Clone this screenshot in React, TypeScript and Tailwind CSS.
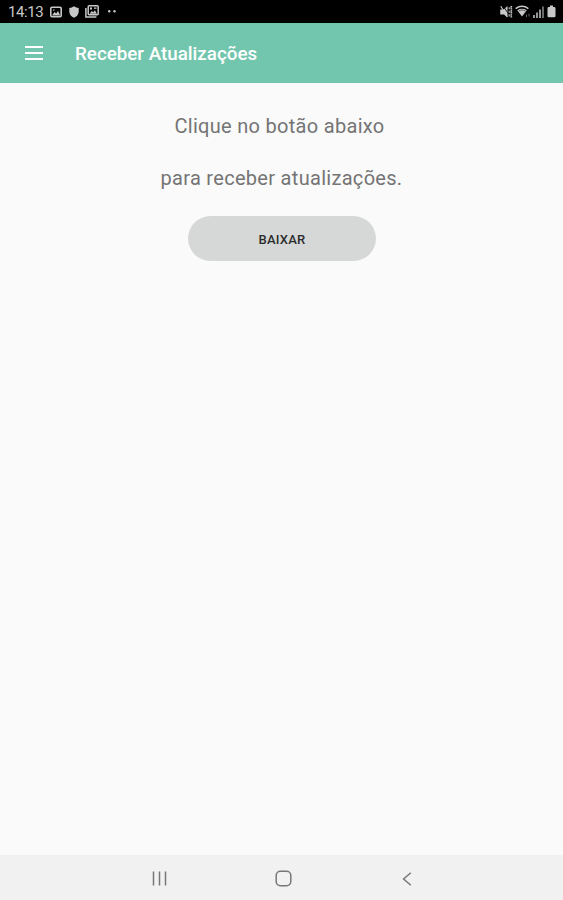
function StatusBar() {
  return (
    <div className="flex h-[23px] shrink-0 items-center bg-black text-[#c8c8c8]">
      <span className="ml-2 w-[36px] whitespace-nowrap pt-[2px] text-[15px] leading-[21px] tracking-[-0.4px]">14:13</span>
      <svg className="ml-[6px]" width="12" height="12" viewBox="0 0 12 12">
        <rect x="0.8" y="1.2" width="10.4" height="9.6" rx="1.2" fill="none" stroke="currentColor" strokeWidth="1.6" />
        <path d="M2 9.5 4.5 6l1.7 1.6L8 5l2.2 4.5z" fill="currentColor" />
        <circle cx="3.8" cy="4" r=".8" fill="currentColor" />
      </svg>
      <svg className="ml-[7px]" width="10" height="12" viewBox="0 0 10 12">
        <path d="M5 .3Q7.2 1.8 9.7 2v4Q9.2 10 5 11.8.8 10 .3 6V2Q2.8 1.8 5 .3z" fill="currentColor" />
      </svg>
      <svg className="ml-[6px]" width="14" height="13" viewBox="0 0 14 13">
        <rect x="3.2" y=".8" width="10" height="9" rx="1" fill="none" stroke="currentColor" strokeWidth="1.5" />
        <path d="M.9 3v9.1h10.5" fill="none" stroke="currentColor" strokeWidth="1.5" />
        <path d="M4.5 8.7 6.8 6l1.5 1.3 1.6-2 2 3.4zM5 2.5h2v2H5zM9 2.5h2.5v1.2H9z" fill="currentColor" />
      </svg>
      <svg className="ml-[9px]" width="8" height="3" viewBox="0 0 8 3" fill="currentColor">
        <circle cx="1.2" cy="1.3" r="1.2" />
        <circle cx="6.5" cy="1.3" r="1.2" />
      </svg>
      <svg className="ml-auto" width="13" height="14" viewBox="0 0 13 14" fill="none" stroke="currentColor">
        <path d="M.2 4.5h3.3L7.5 1v11.5L4 9.5H.2z" fill="currentColor" stroke="none" />
        <path d="m3 1 5 7" stroke="#000" strokeWidth=".9" />
        <path d="m.8 1.2 6.4 10.5" strokeWidth="1.2" />
        <path d="M9.2 2.2v2M9.2 5.7v2M9.2 9.2v2.3M12.2 1.5h-1.1v2.2h1.1M12.2 5.2h-1.1v2.2h1.1M12.2 9h-1.1v3h1.1" strokeWidth="1.1" />
      </svg>
      <svg className="ml-[2px]" width="16" height="13" viewBox="0 0 16 13" fill="none" stroke="currentColor">
        <path d="M.6 3.6Q7-1 13.4 3.6" strokeWidth="1.5" />
        <path d="M2.2 5.2Q7 2.4 11.8 5.2L7 11.4z" fill="currentColor" stroke="none" />
        <path d="M3.5 5.9Q7 3.9 10.5 5.9" stroke="#000" strokeWidth=".5" />
        <path d="M11.5 12V9.5M14 8.7v2.8" strokeWidth="1" opacity=".5" />
      </svg>
      <svg className="ml-[2px]" width="12" height="12" viewBox="0 0 12 12" fill="currentColor">
        <path d="M0 9h2v3H0zM3 6.5h2V12H3zM6 3.5h2V12H6z" opacity=".75" />
        <path d="M9.2.5h1.6V12H9.2z" opacity=".65" />
      </svg>
      <svg className="mr-[7px] ml-[2px]" width="9" height="13" viewBox="0 0 9 13" fill="currentColor">
        <path d="M3 .5h3V2h1.2Q8.5 2 8.5 3.2V11q0 1.3-1.3 1.3H1.8Q.5 12.3.5 11V3.2Q.5 2 1.8 2H3z" />
      </svg>
    </div>
  );
}

export default function App() {
  return (
    <div className="flex h-screen w-full flex-col overflow-hidden bg-[#fafafa] font-['Roboto',sans-serif]">
      <StatusBar />
      <header className="flex h-[60px] shrink-0 items-center bg-[#73c6ae] text-white">
        <button aria-label="Menu" className="ml-[25px] flex h-[14px] w-[18px] flex-col justify-between">
          <span className="h-[1.6px] w-full bg-white" />
          <span className="h-[1.6px] w-full bg-white" />
          <span className="h-[1.6px] w-full bg-white" />
        </button>
        <h1 className="ml-[32px] whitespace-nowrap pt-[2px] text-[18.8px] font-medium leading-6">Receber Atualizações</h1>
      </header>
      <main className="flex flex-1 flex-col items-center text-[#747474]">
        <p className="mt-[30px] ml-[-4px] text-[20px] leading-[26px] tracking-[0.3px]">Clique no botão abaixo</p>
        <p className="mt-[26px] text-[20px] leading-[26px] tracking-[0.3px]">para receber atualizações.</p>
        <button className="mt-[25px] h-[45px] w-[188px] rounded-full bg-[#d6d8d7] pt-[2px] pl-[1px] text-[13px] font-medium leading-[43px] tracking-[0.2px] text-[#2d2d2d]">BAIXAR</button>
      </main>
      <nav className="flex h-[45px] shrink-0 items-center bg-[#f1f1f1] text-[#777]">
        <svg className="ml-[152px] mt-[2px]" width="15" height="15" viewBox="0 0 15 15" fill="none" stroke="currentColor" strokeWidth="1.5">
          <path d="M1.5.5v14M7.5.5v14M13.5.5v14" />
        </svg>
        <svg className="ml-[108px] mt-[2px]" width="17" height="17" viewBox="0 0 17 17" fill="none" stroke="currentColor" strokeWidth="1.5">
          <rect x="1.2" y="1.2" width="14.6" height="14.6" rx="4.2" />
        </svg>
        <svg className="ml-[110px] mt-[2px]" width="10" height="14" viewBox="0 0 10 14" fill="none" stroke="currentColor" strokeWidth="1.5">
          <path d="M8.8.8 1.6 7l7.2 6.2" />
        </svg>
      </nav>
    </div>
  );
}
